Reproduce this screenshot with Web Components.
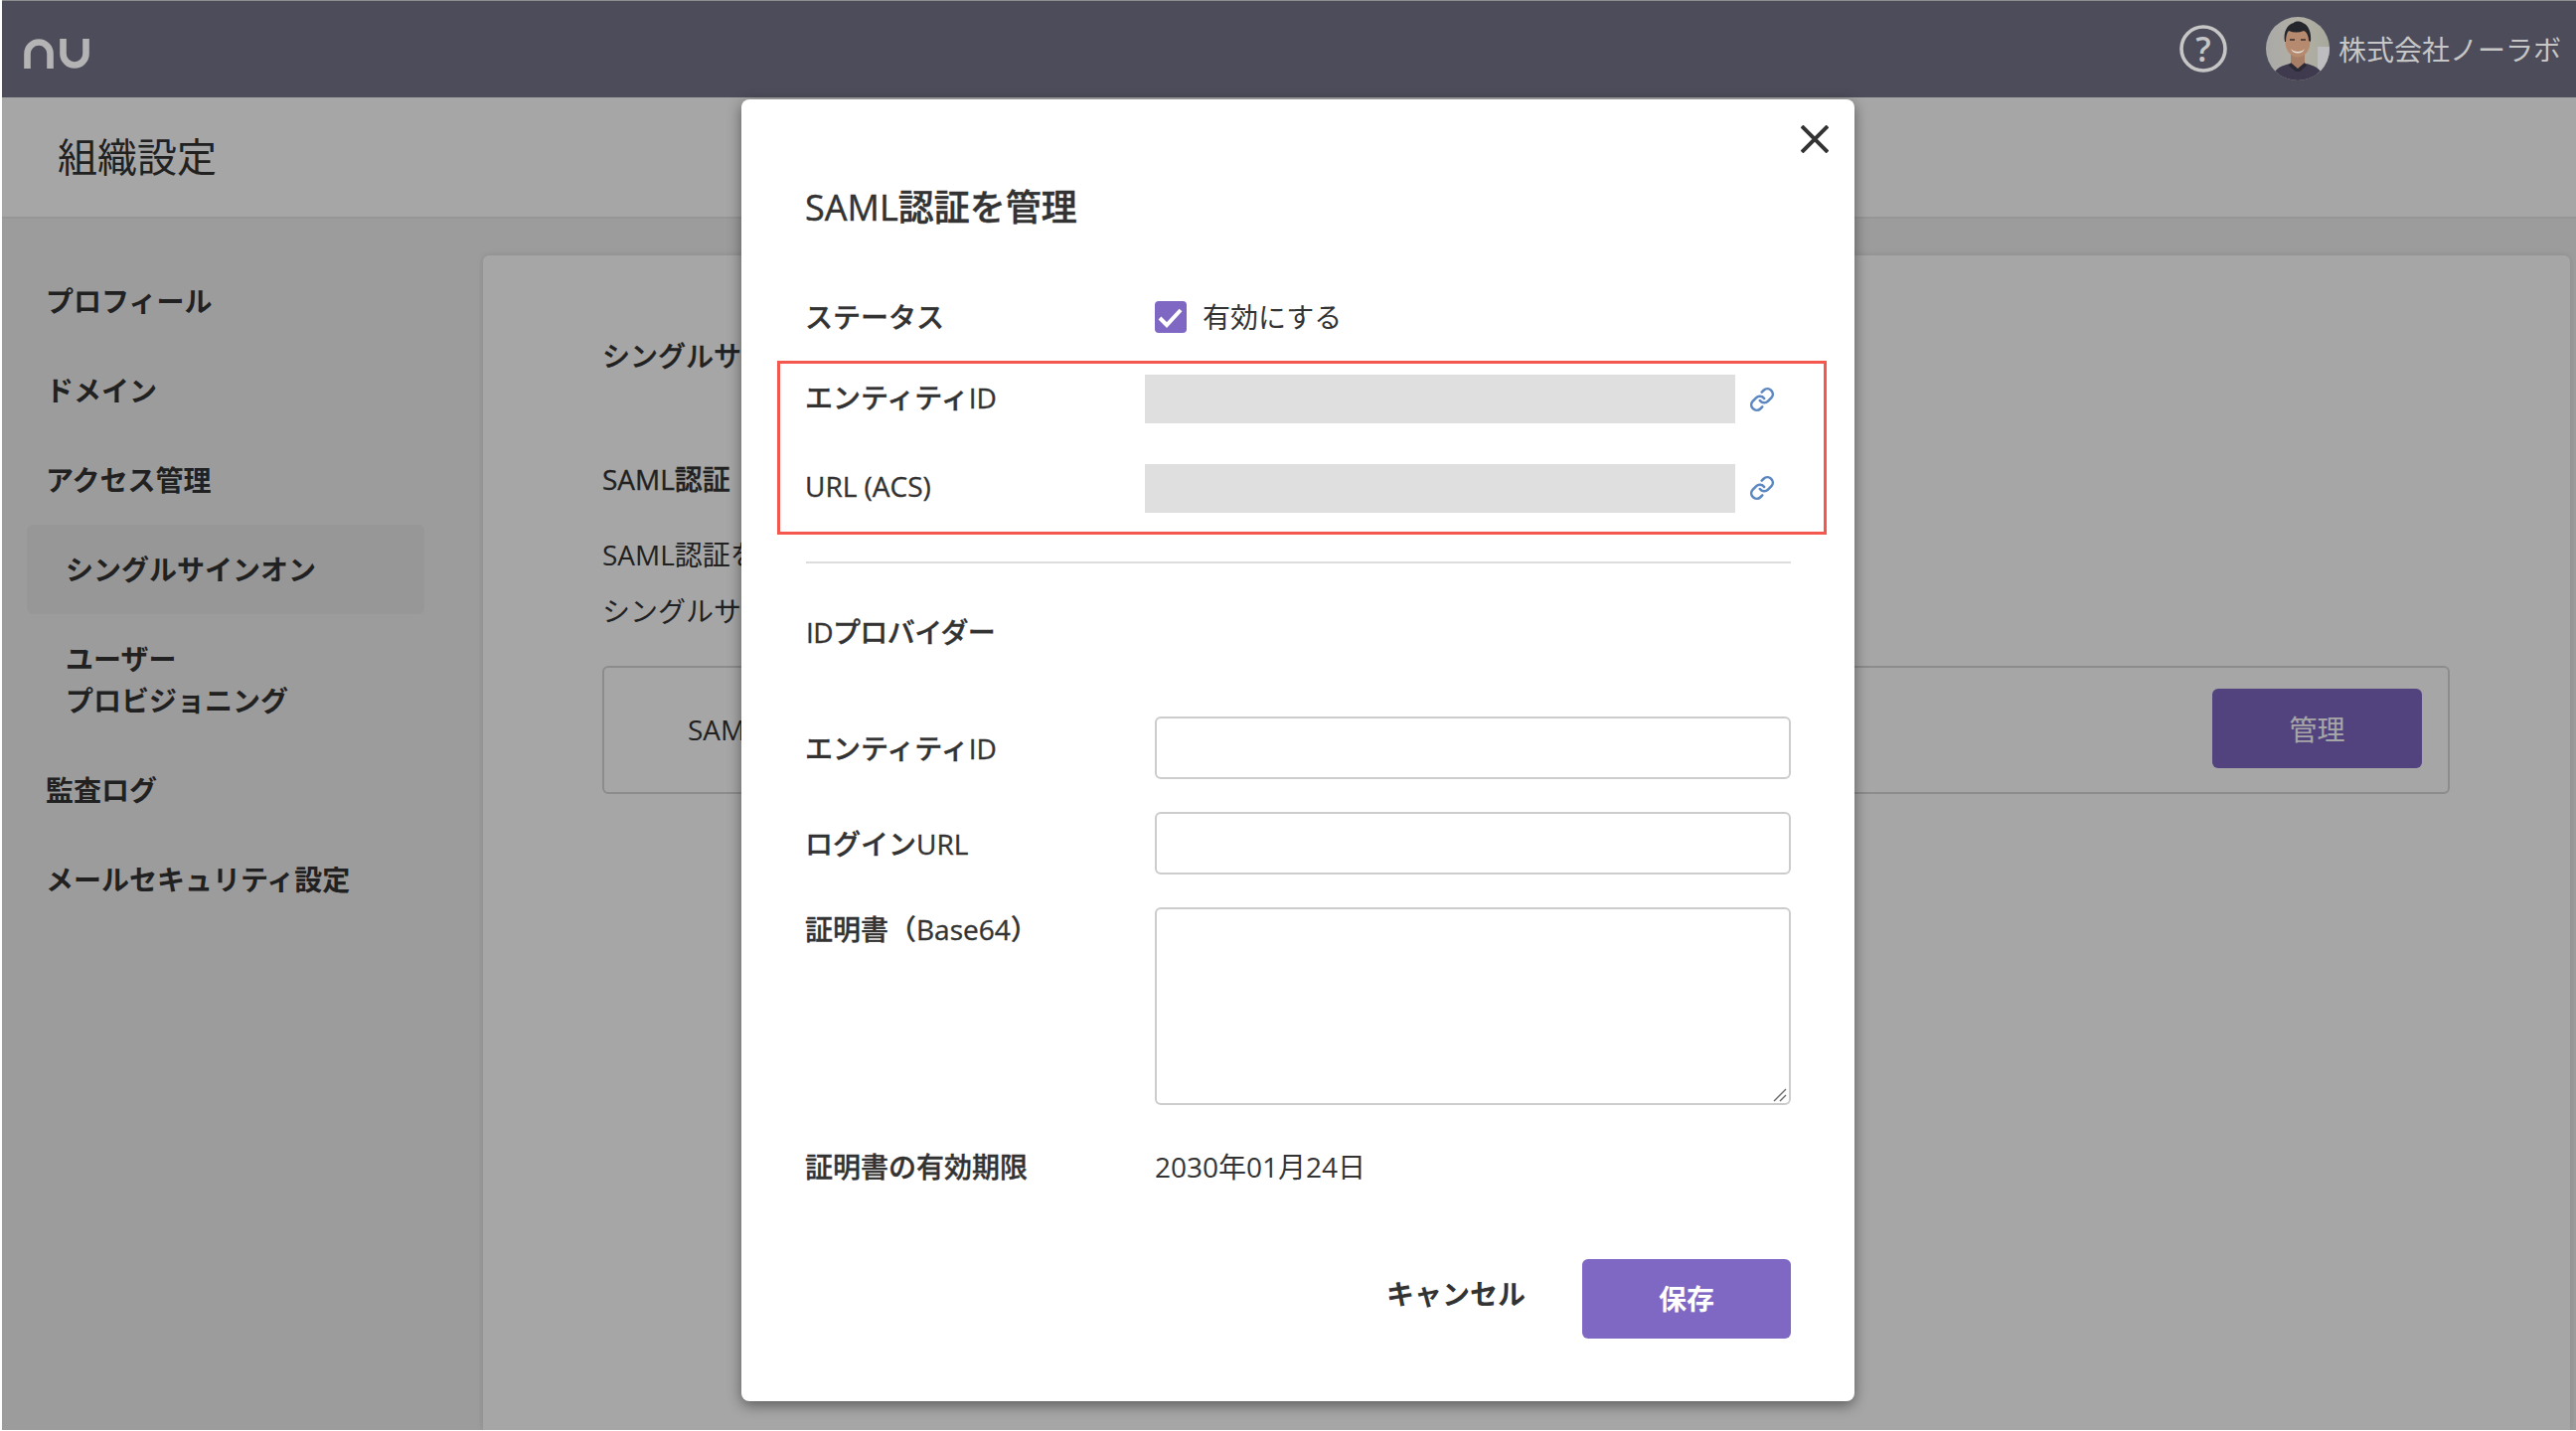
<!DOCTYPE html>
<html lang="ja">
<head>
<meta charset="utf-8">
<title>SAML認証を管理</title>
<style>
html,body{margin:0;padding:0;background:#fff;font-family:"Open Sans","Noto Sans CJK JP",sans-serif;color:#333;}
</style>
</head>
<body>
<nu-app>
  <nu-header slot="header" name="株式会社ノーラボ"></nu-header>
  <nu-pagetitle slot="title">組織設定</nu-pagetitle>
  <nu-sidebar slot="side">
    <nu-navitem>プロフィール</nu-navitem>
    <nu-navitem>ドメイン</nu-navitem>
    <nu-navitem>アクセス管理</nu-navitem>
    <nu-navitem sub active>シングルサインオン</nu-navitem>
    <nu-navitem sub>ユーザー<br>プロビジョニング</nu-navitem>
    <nu-navitem>監査ログ</nu-navitem>
    <nu-navitem>メールセキュリティ設定</nu-navitem>
  </nu-sidebar>
  <nu-card slot="main"></nu-card>
  <nu-modal slot="modal" heading="SAML認証を管理">
    <nu-row class="status" label="ステータス"><nu-check>有効にする</nu-check></nu-row>
    <nu-highlight>
      <nu-readonly label="エンティティID" lift="3" icon="0"></nu-readonly>
      <nu-readonly label="URL (ACS)" lift="6" icon="-2"></nu-readonly>
    </nu-highlight>
    <nu-section>IDプロバイダー</nu-section>
    <nu-row label="エンティティID"><nu-input></nu-input></nu-row>
    <nu-row label="ログインURL"><nu-input></nu-input></nu-row>
    <nu-row label="証明書（Base64）" top><nu-textarea></nu-textarea></nu-row>
    <nu-row class="expiry" label="証明書の有効期限">2030年01月24日</nu-row>
    <nu-footer>
      <nu-textbutton>キャンセル</nu-textbutton>
      <nu-button width="210" height="80" radius="6" bold>保存</nu-button>
    </nu-footer>
  </nu-modal>
</nu-app>
<script>
function def(name, css, html){
  class C extends HTMLElement{
    constructor(){super();this.attachShadow({mode:'open'});}
    connectedCallback(){
      let h = typeof html==='function'?html(this):html;
      this.shadowRoot.innerHTML='<style>'+css+'</style>'+h;
    }
  }
  customElements.define(name,C);
}
def('nu-app',`
  :host{display:block;position:relative;margin-left:2px;height:1439px;overflow:hidden;background:#f0f0f0;}
  main{display:flex;align-items:stretch;height:1219px;}
  .overlay{position:absolute;left:0;right:0;top:98px;bottom:0;background:rgba(0,0,0,.35);}
`,`<slot name="header"></slot><slot name="title"></slot><main><slot name="side"></slot><slot name="main"></slot></main><div class="overlay"></div><slot name="modal"></slot>`);

def('nu-header',`
  :host{display:flex;position:relative;z-index:2;box-sizing:border-box;height:98px;align-items:center;padding:0 15px 2px 22px;background:#4d4c5a;border-top:1px solid #8e8e8e;color:#c6c6c6;font-size:28px;}
  .logo{display:block;width:66px;height:30px;margin-top:10px;}
  .sp{flex:1;}
  .help{position:relative;width:48px;height:48px;margin-right:39px;display:flex;align-items:center;justify-content:center;font-size:34px;line-height:48px;font-weight:600;}
  .help svg{position:absolute;inset:0;}
  .av{width:64px;height:64px;margin-right:9px;display:block;filter:blur(.5px);}
`,h=>`
  <svg class="logo" viewBox="0 0 66 30" fill="none" stroke="#b4b4b5" stroke-width="6.6"><path d="M3.5 30V15A11.5 11.5 0 0 1 26.5 15V30"/><path d="M39.5 0V15A11.5 11.5 0 0 0 62.5 15V0"/></svg>
  <span class="sp"></span>
  <span class="help"><svg viewBox="0 0 48 48" fill="none" stroke="#c6c6c6" stroke-width="3.6"><circle cx="24" cy="24" r="22"/></svg>?</span>
  <svg class="av" viewBox="0 0 64 64">
    <defs>
      <linearGradient id="bg" x1="0" x2="1" y1="0" y2="0"><stop offset="0" stop-color="#a9a9a8"/><stop offset=".55" stop-color="#b2b0a4"/><stop offset="1" stop-color="#a8a89c"/></linearGradient>
      <clipPath id="c"><circle cx="32" cy="32" r="32"/></clipPath>
    </defs>
    <g clip-path="url(#c)">
      <rect width="64" height="64" fill="url(#bg)"/>
      <path d="M52 30h12v34H52z" fill="#bdbdc0"/>
      <path d="M6 64c1-10 6-14 18-17l8 3 9-3c11 3 16 7 18 17z" fill="#3f3a4d"/>
      <path d="M25 36h14v11l-7 6-7-6z" fill="#a67f66"/>
      <path d="M25 46l7 6 7-6 2 3-7 6h-4l-7-6z" fill="#2a2a36"/>
      <ellipse cx="32" cy="25" rx="12.5" ry="15.5" fill="#b58a6e"/>
      <path d="M19 25c-2-10 3-18 9-19 1-2 7-2 9 0 6 2 9 10 8 19l-2-1c0-5-2-9-5-10-5 2-10 2-15 0-2 2-3 6-3 11z" fill="#25252c"/>
      <path d="M25 32c3 4 11 4 14 0-2 6-12 6-14 0z" fill="#e9e2da"/>
      <path d="M24 23h5M35 23h5" stroke="#3a2e2a" stroke-width="1.6"/>
    </g>
  </svg>
  <span class="name">${h.getAttribute('name')}</span>`);

def('nu-pagetitle',`
  :host{display:flex;align-items:center;box-sizing:border-box;height:122px;padding:0 0 0 56px;background:#fff;border-bottom:2px solid #e6e6e6;font-size:40px;line-height:56px;color:#333;}
`,`<slot></slot>`);

def('nu-sidebar',`
  :host{display:block;box-sizing:border-box;flex:0 0 484px;padding:38px 59px 0 25px;}
`,`<slot></slot>`);

def('nu-navitem',`
  :host{display:block;box-sizing:border-box;padding:24px 19px;font-size:28px;line-height:42px;font-weight:700;color:#333;border-radius:6px;}
  :host([sub]){padding-left:39px;}
  :host([active]){background:#e8e8e8;}
`,`<slot></slot>`);

def('nu-card',`
  :host{display:block;box-sizing:border-box;flex:1;margin:37px 6px 0 0;padding:80px 121px 0 120px;background:#fff;border-radius:6px 6px 0 0;box-shadow:0 0 6px rgba(0,0,0,.12);font-size:28px;color:#333;}
  h3,h4{margin:0;font-size:28px;line-height:42px;font-weight:500;-webkit-text-stroke:.35px currentColor;}
  h3{margin-bottom:82px;}
  p{margin:0;line-height:57px;}
  h4{margin-bottom:27px;}
  .box{display:flex;align-items:center;justify-content:space-between;box-sizing:border-box;height:129px;margin-top:26px;padding:0 26px 3px 84px;border:2px solid #d8d8d8;border-radius:6px;}
`,`<h3>シングルサインオン</h3><h4>SAML認証</h4><p>SAML認証を有効</p><p>シングルサイン</p>
  <div class="box"><span>SAML認証</span><nu-button width="211" height="80" radius="6">管理</nu-button></div>`);

def('nu-button',`
  :host{display:flex;align-items:center;justify-content:center;background:#7f67c4;color:#fff;font-size:28px;}
  :host([bold]){font-weight:700;}
`,h=>{
  h.style.width=h.getAttribute('width')+'px';
  h.style.height=h.getAttribute('height')+'px';
  h.style.borderRadius=h.getAttribute('radius')+'px';
  return `<slot></slot>`;
});

def('nu-modal',`
  :host{display:block;position:absolute;z-index:3;left:744px;top:100px;width:1120px;height:1310px;box-sizing:border-box;padding:84px 64px 0 65px;background:#fff;border-radius:8px;box-shadow:0 4px 14px rgba(0,0,0,.45);font-size:28px;line-height:42px;color:#333;}
  h2{margin:0 0 64px -1px;font-size:36px;line-height:50px;font-weight:500;-webkit-text-stroke:.45px currentColor;}
  .x{position:absolute;left:1066px;top:26px;width:28px;height:28px;display:block;}
`,h=>`
  <svg class="x" viewBox="0 0 28 28" stroke="#333" stroke-width="4"><path d="M1 1L27 27M27 1L1 27"/></svg>
  <h2>${h.getAttribute('heading')}</h2><slot></slot>`);

def('nu-row',`
  :host{display:grid;grid-template-columns:351px 640px;align-items:center;margin-top:33px;}
  :host(.status){margin-top:0;height:40px;}
  :host(.expiry){margin-top:41px;}
  :host([top]){align-items:start;}
  .l{font-weight:500;margin-left:-1px;-webkit-text-stroke:.35px currentColor;}
  :host([top]) .l{margin-top:1px;}
`,h=>`<div class="l">${h.getAttribute('label')}</div><div><slot></slot></div>`);

def('nu-check',`
  :host{display:flex;align-items:center;gap:16px;}
  svg{display:block;width:32px;height:32px;}
`,`<svg viewBox="0 0 32 32"><rect width="32" height="32" rx="4" fill="#7f67c4"/><path d="M5 17l7 7L26 9" fill="none" stroke="#fff" stroke-width="4"/></svg><slot></slot>`);

def('nu-highlight',`
  :host{display:block;box-sizing:border-box;height:175px;margin:25px -36px 0 -29px;padding:11px 0 0 26px;border:3px solid #f4574e;}
`,`<slot></slot>`);

def('nu-readonly',`
  :host{display:grid;grid-template-columns:341px 594px 25px;align-items:center;height:49px;margin-bottom:41px;}
  .l{font-weight:500;margin-left:-1px;-webkit-text-stroke:.35px currentColor;}
  .f{height:49px;background:#dfdfdf;}
  svg{display:block;width:26px;height:26px;margin-left:14px;}
`,h=>`<div class="l" style="margin-bottom:${h.getAttribute('lift')}px">${h.getAttribute('label')}</div><div class="f"></div>
  <svg style="margin-top:${h.getAttribute('icon')}px" viewBox="0 0 24 24" fill="none" stroke="#5c87c1" stroke-width="2.4" stroke-linecap="round" stroke-linejoin="round"><path d="M10 13a5 5 0 0 0 7.54.54l3-3a5 5 0 0 0-7.07-7.07l-1.72 1.71"/><path d="M14 11a5 5 0 0 0-7.54-.54l-3 3a5 5 0 0 0 7.07 7.07l1.71-1.71"/></svg>`);

def('nu-section',`
  :host{display:block;margin:27px 0 64px;padding-top:48px;border-top:2px solid #ddd;font-weight:500;letter-spacing:-.6px;-webkit-text-stroke:.35px currentColor;}
`,`<slot></slot>`);

def('nu-input',`
  :host{display:block;}
  input{display:block;box-sizing:border-box;width:640px;height:63px;padding:0 16px;margin:0;border:2px solid #ccc;border-radius:6px;background:#fff;outline:none;font:inherit;}
`,`<input type="text">`);

def('nu-textarea',`
  :host{display:block;position:relative;}
  textarea{display:block;box-sizing:border-box;width:640px;height:199px;padding:12px 16px;margin:0;border:2px solid #ccc;border-radius:6px;background:#fff;outline:none;font:inherit;resize:none;}
  svg{position:absolute;right:4px;bottom:3px;width:14px;height:14px;display:block;}
`,`<textarea></textarea><svg viewBox="0 0 14 14" fill="none" stroke="#666" stroke-width="1.4"><path d="M1 13L13 1M7 13L13 7"/></svg>`);

def('nu-footer',`
  :host{display:flex;justify-content:flex-end;align-items:center;gap:57px;margin-top:72px;}
`,`<slot></slot>`);

def('nu-textbutton',`
  :host{display:block;font-weight:700;margin-bottom:10px;}
`,`<slot></slot>`);
</script>
</body>
</html>
